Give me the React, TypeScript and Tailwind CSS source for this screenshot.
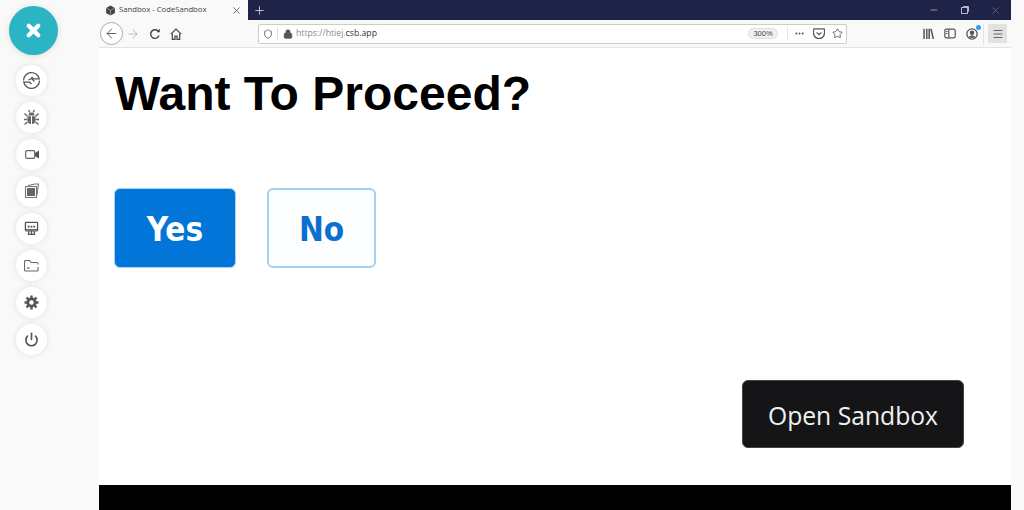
import React from "react";
import { X, ArrowLeft, ArrowRight, Lock, Shield, Star, Plus, Minus, Menu, Power, Ellipsis } from "lucide-react";

function Rail({ children }: { children: React.ReactNode }) {
  return (
    <div className="w-[31px] h-[31px] rounded-full bg-white flex items-center justify-center shadow-[0_0_6px_rgba(0,0,0,0.1)] text-[#555]">
      {children}
    </div>
  );
}

function Pocket() {
  return (
    <svg width="12" height="11" viewBox="0 0 15 14" fill="none" stroke="#555" strokeWidth="1.600">
      <path d="M1.500 1h12a1 1 0 0 1 1 1v4.500a7 7 0 0 1-14 0V2a1 1 0 0 1 1-1z" />
      <path d="M4.500 5.500l3 3 3-3" />
    </svg>
  );
}

function Library() {
  return (
    <svg width="11" height="11" viewBox="0 0 16 14" stroke="#555" strokeWidth="2.200" fill="none" preserveAspectRatio="none">
      <path d="M1.500 1v13M5.500 1v13M9 1v13M11.500 1l3.500 13" />
    </svg>
  );
}

function Sidebar() {
  return (
    <svg width="12" height="11" viewBox="0 0 15 13" stroke="#555" strokeWidth="1.500" fill="none">
      <rect x="1" y="1" width="13" height="11" rx="2" />
      <path d="M6 1v11" />
      <path d="M2.500 4h2M2.500 6.500h2" />
    </svg>
  );
}

function Account() {
  return (
    <div className="relative w-[12px] h-[12px]">
      <svg width="12" height="12" viewBox="0 0 14 14">
        <circle cx="7" cy="7" r="6" fill="none" stroke="#555" strokeWidth="1.500" />
        <circle cx="7" cy="5.500" r="2.600" fill="#555" />
        <path d="M2.800 11.500a4.400 4.400 0 0 1 8.400 0z" fill="#555" />
      </svg>
      <span className="absolute -top-[3px] -right-[3px] w-[5px] h-[5px] rounded-full bg-[#2aa0f0]" />
    </div>
  );
}

function SyncIcon() {
  return (
    <svg width="19" height="19" viewBox="0 0 19 19" fill="none" stroke="#555" strokeWidth="1.300">
      <path d="M1.500 9.500A8 8 0 0 1 17.300 7.800H11.500L9.500 6" />
      <path d="M17.500 9.500A8 8 0 0 1 1.700 11.200H7.500L9.500 13" />
      <path d="M6.500 9l3-1.500 3 3" strokeWidth="1.200" />
    </svg>
  );
}

function BugIcon() {
  return (
    <svg width="17" height="17" viewBox="0 0 17 17" fill="none" stroke="#666" strokeWidth="1.400">
      <path d="M5.500 6.500a3 3 0 0 1 6 0z" fill="#666" stroke="none" />
      <path d="M4.500 7.200h3.500V15c-2-.2-3.500-1.500-3.500-3.500zM12.500 7.200H9V15c2-.2 3.500-1.500 3.500-3.500z" fill="#666" stroke="none" />
      <path d="M1.500 4.500L4.500 7.500M15.500 4.500l-3 3M1 10.500h3.500M16 10.500h-3.500M1.500 15.500l3-2.500M15.500 15.500l-3-2.500M5.500 1l1.500 2.500M11.500 1L10 3.500" />
    </svg>
  );
}

function CubeLogo() {
  return (
    <svg width="11" height="11" viewBox="0 0 10 10">
      <path d="M5 0.500l4 2.200v4.600l-4 2.200-4-2.200V2.700z" fill="#444" />
      <path d="M1.200 2.800L5 5l3.800-2.200M5 5v4.500" stroke="#bbb" strokeWidth="0.600" fill="none" />
    </svg>
  );
}

function DesktopIcon() {
  return (
    <svg width="15" height="15" viewBox="0 0 16 15" fill="none" stroke="#555" strokeWidth="1.400">
      <rect x="1.500" y="1" width="13" height="9" rx="0.800" />
      <path d="M4 5.500h2M7 5.500h2M10 5.500h2" strokeWidth="1.800" />
      <path d="M2 8.500h12" strokeWidth="1" />
      <path d="M8 10v3M4 13.800h8M5.500 10.500L4.500 13.500M10.500 10.500l1 3" />
    </svg>
  );
}

function PagesIcon() {
  return (
    <svg width="16" height="16" viewBox="0 0 16 16" fill="none" stroke="#777" strokeWidth="1.100">
      <path d="M4 2.500l7-1.500h3.500l-1.500 11" />
      <rect x="1.500" y="3.500" width="11" height="11" fill="#fff" />
      <rect x="3" y="5" width="8" height="8" fill="#666" stroke="none" />
    </svg>
  );
}

function CameraIcon() {
  return (
    <svg width="14" height="11" viewBox="0 0 14 11" fill="none">
      <rect x="0.700" y="1.700" width="9" height="7.600" rx="1" stroke="#666" strokeWidth="1.200" />
      <path d="M10 4l4-2.500v8L10 7z" fill="#555" />
    </svg>
  );
}

function FolderIcon() {
  return (
    <svg width="15" height="13" viewBox="0 0 15 13" fill="none" stroke="#666" strokeWidth="1.100">
      <path d="M14 5.500V4.500a1 1 0 0 0-1-1H7L5.500 1.500H1.500a1 1 0 0 0-1 1V11a1 1 0 0 0 1 1H13a1 1 0 0 0 1-1V8" />
      <path d="M3 9h2.500" strokeWidth="1.300" />
    </svg>
  );
}

function GearIcon() {
  return (
    <svg width="15" height="15" viewBox="0 0 15 15" fill="none" stroke="#555">
      <circle cx="7.500" cy="7.500" r="3.700" strokeWidth="2.800" />
      <path d="M7.500 0.500v2.500M7.500 12v2.500M0.500 7.500H3M12 7.500h2.500M2.500 2.500l1.800 1.800M10.700 10.700l1.800 1.800M12.500 2.500l-1.800 1.800M4.300 10.700l-1.800 1.800" strokeWidth="2.400" />
    </svg>
  );
}

function RestoreIcon() {
  return (
    <svg width="8" height="8" viewBox="0 0 8 8" fill="none" stroke="#b5b8c8" strokeWidth="1">
      <path d="M2.500 1.500V0.500h5v5H6.500" />
      <rect x="0.500" y="1.500" width="6" height="6" />
    </svg>
  );
}

function ReloadIcon() {
  return (
    <svg width="12" height="12" viewBox="0 0 12 12" fill="none" stroke="#444" strokeWidth="1.400">
      <path d="M10 7.500A4.300 4.300 0 1 1 9 3" />
      <path d="M10.800 0.800v3.400H7.400z" fill="#444" stroke="none" />
    </svg>
  );
}

function HomeIcon() {
  return (
    <svg width="12" height="12" viewBox="0 0 12 12" fill="none" stroke="#444" strokeWidth="1.200">
      <path d="M0.800 6.200L6 1l5.200 5.200" />
      <path d="M2.300 5.500v5.800h2.700V8h2v3.300h2.700V5.500" />
    </svg>
  );
}

export default function App() {
  return (
    <div className="w-[1024px] h-[510px] flex bg-[#f9f9f9] overflow-hidden font-['Liberation_Sans',sans-serif]">
      <aside className="w-[99px] shrink-0 flex flex-col">
        <div className="ml-[9px] mt-[6px] w-[49px] h-[49px] rounded-full bg-[#2bb4c4] flex items-center justify-center shadow-[0_1px_6px_rgba(0,0,0,0.12)]">
          <X size={19} strokeWidth={5.500} className="text-white" />
        </div>
        <div className="ml-[16px] mt-[9.500px] flex flex-col gap-[6.140px]">
          <Rail><SyncIcon /></Rail>
          <Rail><BugIcon /></Rail>
          <Rail><CameraIcon /></Rail>
          <Rail><PagesIcon /></Rail>
          <Rail><DesktopIcon /></Rail>
          <Rail><FolderIcon /></Rail>
          <Rail><GearIcon /></Rail>
          <Rail><Power size={15} strokeWidth={2.600} /></Rail>
        </div>
      </aside>

      <main className="w-[912px] shrink-0 flex flex-col bg-white">
        <div className="h-[20px] flex bg-[#1f2347] shrink-0">
          <div className="w-[149px] bg-[#f9f9fa] flex items-center pl-[6px] text-[#444]">
            <CubeLogo />
            <span className="ml-[3px] w-[87px] text-[7.700px] font-['Open_Sans',sans-serif] whitespace-nowrap">Sandbox - CodeSandbox</span>
            <X size={11} strokeWidth={1.500} className="ml-[25px] text-[#333]" />
          </div>
          <div className="w-[22px] flex items-center justify-center">
            <Plus size={13} strokeWidth={1.500} className="text-[#ddd]" />
          </div>
          <div className="ml-auto flex items-center">
            <Minus size={10} strokeWidth={1.500} className="mr-[22px] text-[#ddd]" />
            <div className="mr-[21px] flex"><RestoreIcon /></div>
            <X size={11} strokeWidth={1} className="mr-[10px] text-[#99a]" />
          </div>
        </div>

        <div className="h-[28px] flex items-center bg-[#f9f9fa] border-b border-[#e3e3e5] shrink-0 text-[#555]">
          <div className="ml-[1px] w-[23px] h-[23px] rounded-full border border-[#aaa] bg-white flex items-center justify-center">
            <ArrowLeft size={15} strokeWidth={1.500} />
          </div>
          <ArrowRight size={14} strokeWidth={1.300} className="ml-[3px] text-[#aaa]" />
          <div className="ml-[9px] flex"><ReloadIcon /></div>
          <div className="ml-[9px] flex"><HomeIcon /></div>
          <div className="ml-[76px] w-[589px] h-[20px] bg-white border border-[#ccc] rounded-[2px] flex items-center pl-[4px] pr-[3px]">
            <Shield size={10} strokeWidth={2} />
            <div className="ml-[4px] w-px h-[13px] bg-[#ddd]" />
            <Lock size={10} strokeWidth={2} fill="#555" className="ml-[5px]" />
            <span className="ml-[3px] text-[8.700px] font-['Open_Sans',sans-serif] text-[#888] whitespace-nowrap">
              https://htiej.<span className="text-[#333]">csb.app</span>
            </span>
            <div className="ml-auto w-[30px] h-[11px] rounded-full border border-[#ddd] bg-[#f0f0f0] text-[7.500px] text-[#444] flex items-center justify-center">300%</div>
            <div className="ml-[9px] w-px h-[13px] bg-[#e5e5e5]" />
            <Ellipsis size={11} strokeWidth={2.500} className="ml-[6px]" />
            <div className="ml-[8px] flex"><Pocket /></div>
            <Star size={11} strokeWidth={1.800} className="ml-[7px]" />
          </div>
          <div className="ml-[76px] flex"><Library /></div>
          <div className="ml-[10px] flex"><Sidebar /></div>
          <div className="ml-[10px] flex"><Account /></div>
          <div className="ml-[5px] w-px h-[22px] bg-[#e3e3e3]" />
          <div className="ml-[4px] w-[19px] h-[19px] rounded-[2px] bg-[#e2e2e3] flex items-center justify-center">
            <Menu size={12} strokeWidth={1.800} />
          </div>
        </div>

        <div className="flex-1 min-h-0 flex flex-col pl-[15px]">
          <h1 className="mt-[16px] ml-[1px] text-[48px] leading-[60px] font-bold text-black">Want To Proceed?</h1>
          <div className="mt-[64px] flex gap-[31px] font-['DejaVu_Sans_Condensed','DejaVu_Sans',sans-serif] font-bold">
            <div className="w-[122px] h-[80px] pt-[3px] rounded-[6px] bg-[#0275d8] border border-[#a9d3f3] text-white flex items-center justify-center text-[33px]">Yes</div>
            <div className="w-[109px] h-[80px] pt-[3px] rounded-[6px] bg-[#fcfeff] border-2 border-[#a5d0f0] text-[#0a6fcf] flex items-center justify-center text-[33px]">No</div>
          </div>
          <div className="mt-auto mb-[37px] mr-[47px] self-end w-[222px] h-[68px] pt-[3px] rounded-[6px] bg-[#151517] border border-[#444] text-[#f0f0f0] flex items-center justify-center text-[24.700px] font-['Open_Sans',sans-serif]">Open Sandbox</div>
        </div>
        <div className="h-[25px] bg-black shrink-0" />
      </main>
    </div>
  );
}
